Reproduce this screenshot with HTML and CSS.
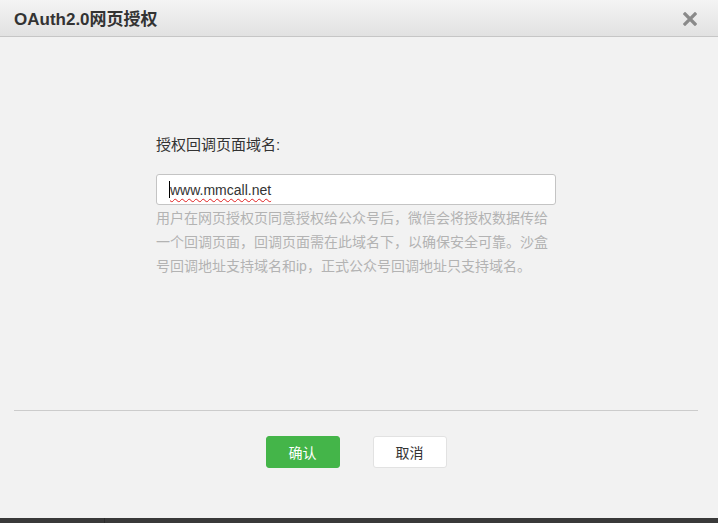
FILE: index.html
```html
<!DOCTYPE html>
<html lang="zh-CN">
<head>
    <meta charset="UTF-8">
    <meta name="viewport" content="width=device-width, initial-scale=1.0">
    <title>OAuth2.0网页授权</title>
    <link rel="stylesheet" href="styles.css">
</head>
<body>
    <div class="dialog">
        <div class="dialog-head">
            <h3 class="dialog-title">OAuth2.0网页授权</h3>
            <span class="dialog-close">
                <svg width="14" height="14" viewBox="0 0 14 14">
                    <path d="M2 2 L12 12 M12 2 L2 12" stroke="#8a8a8a" stroke-width="3.2" stroke-linecap="square" fill="none"/>
                </svg>
            </span>
        </div>

        <div class="dialog-body">
            <div class="form-item">
                <label class="form-label">授权回调页面域名:</label>
                <div class="field">
                    <span class="caret"></span><span class="field-value">www.mmcall.net</span>
                </div>
                <p class="form-tips">用户在网页授权页同意授权给公众号后，微信会将授权数据传给一个回调页面，回调页面需在此域名下，以确保安全可靠。沙盒号回调地址支持域名和ip，正式公众号回调地址只支持域名。</p>
            </div>
        </div>

        <div class="dialog-foot">
            <button class="btn btn-primary">确认</button>
            <button class="btn btn-default">取消</button>
        </div>

        <div class="taskbar">
            <span class="taskbar-left"></span>
        </div>
    </div>
</body>
</html>
```

FILE: styles.css
```css
* {
    margin: 0;
    padding: 0;
    box-sizing: border-box;
}

body {
    font-family: "Liberation Sans", "Noto Sans CJK SC", sans-serif;
    background-color: #f2f2f2;
    color: #333333;
    width: 718px;
    height: 523px;
    overflow: hidden;
}

.dialog {
    display: flex;
    flex-direction: column;
    height: 100vh;
}

/* header */
.dialog-head {
    height: 37px;
    display: flex;
    justify-content: space-between;
    align-items: center;
    padding: 0 21px 0 14px;
    background: linear-gradient(to bottom, #f4f4f4, #e2e2e2);
    border-bottom: 1px solid #c6c6c6;
}

.dialog-title {
    font-size: 17px;
    font-weight: bold;
    color: #333333;
    margin-top: -1px;
}

.dialog-close {
    display: flex;
    width: 14px;
    height: 14px;
    margin-top: 1px;
}

/* body */
.dialog-body {
    flex: 1;
    width: 712px;
    padding-top: 97px;
}

.form-item {
    width: 400px;
    margin: 0 auto;
}

.form-label {
    display: block;
    font-size: 15px;
    line-height: 22px;
    margin-bottom: 18px;
}

.field {
    height: 31px;
    background-color: #ffffff;
    border: 1px solid #c4c4c4;
    border-radius: 3px;
    display: flex;
    align-items: center;
    padding-left: 12px;
    font-size: 14px;
    color: #333333;
}

.caret {
    width: 1px;
    height: 17px;
    background-color: #000000;
}

.field-value {
    text-decoration: underline wavy #e02020;
    text-decoration-thickness: 1px;
    text-underline-offset: 3px;
}

.form-tips {
    margin-top: 1px;
    font-size: 14px;
    line-height: 24px;
    color: #b3b3b3;
}

/* footer */
.dialog-foot {
    width: 684px;
    margin: 0 14px;
    border-top: 1px solid #cccccc;
    padding: 25px 0 50px;
    display: flex;
    justify-content: center;
    gap: 33px;
}

.btn {
    width: 74px;
    height: 32px;
    border-radius: 3px;
    font-family: "Liberation Sans", "Noto Sans CJK SC", sans-serif;
    font-size: 14px;
    cursor: pointer;
}

.btn-primary {
    background-color: #44b549;
    border: 1px solid #44b549;
    color: #ffffff;
}

.btn-default {
    background-color: #ffffff;
    border: 1px solid #e2e2e2;
    color: #333333;
}

.taskbar {
    height: 5px;
    background-color: #393939;
    display: flex;
}

.taskbar-left {
    width: 105px;
    border-right: 1px solid #2c2c2c;
}
```
